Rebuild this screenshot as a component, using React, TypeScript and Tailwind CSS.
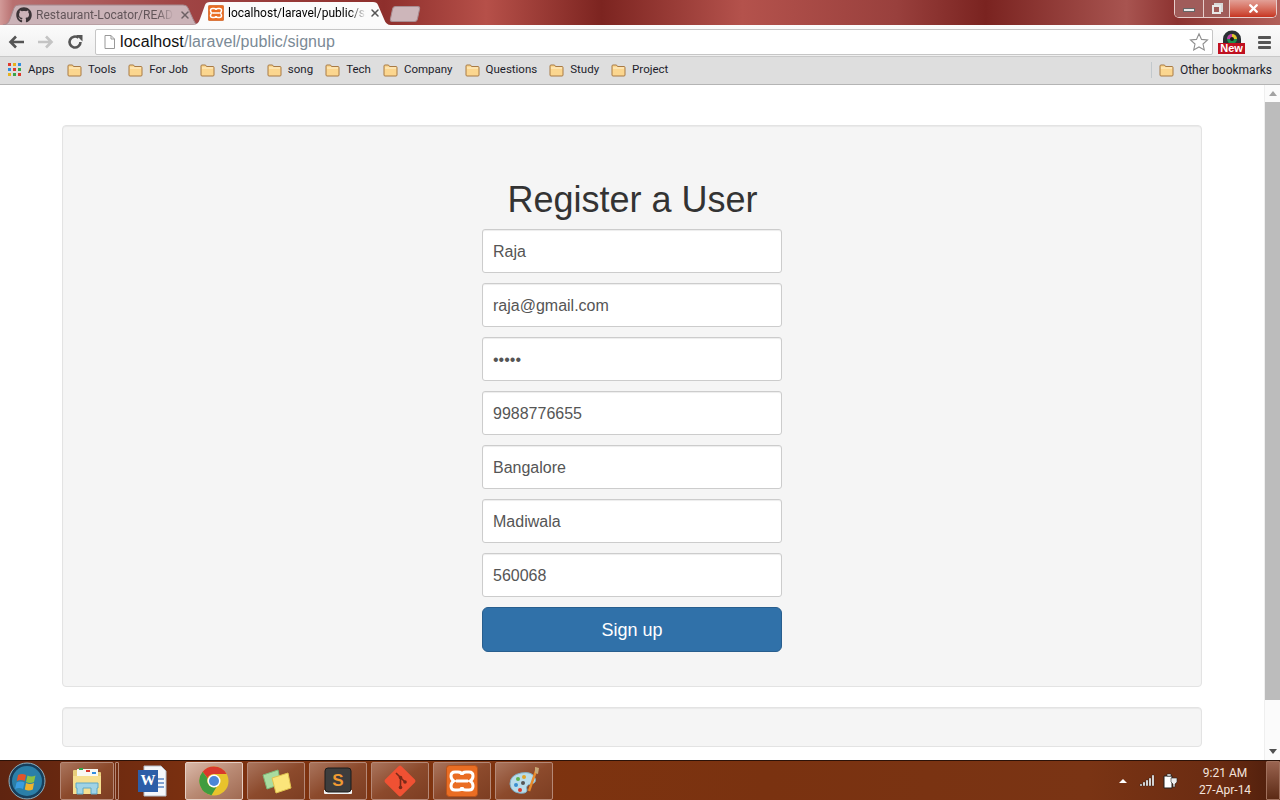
import { FaGithub } from "react-icons/fa";
import { X } from "lucide-react";

const bookmarks = ["Tools", "For Job", "Sports", "song", "Tech", "Company", "Questions", "Study", "Project"];
const fields = ["Raja", "raja@gmail.com", "*****", "9988776655", "Bangalore", "Madiwala", "560068"];

function Folder() {
  return (
    <svg width="15" height="14" viewBox="0 0 15 14" className="shrink-0">
      <path d="M1 12V3q0-1 1-1h3.500l1 1.500H13q1 0 1 1V12q0 1-1 1H2q-1 0-1-1z" fill="#fbd68f" stroke="#a87a45" />
      <path d="M2 5h11" stroke="#fff1cf" />
    </svg>
  );
}

function AppsGrid() {
  const colors = ["#e0382c", "#e8b21c", "#2f8de0", "#2f8de0", "#e0382c", "#3aa54a", "#e8b21c", "#3aa54a", "#e0382c"];
  return (
    <div className="grid h-[13px] w-[13px] shrink-0 grid-cols-3 gap-[2px]">
      {colors.map((c, i) => (
        <svg key={i} viewBox="0 0 3 3" className="h-[3px] w-[3px]">
          <rect width="3" height="3" fill={c} />
        </svg>
      ))}
    </div>
  );
}

function XamppIcon({ size = 16 }: { size?: number }) {
  return (
    <svg width={size} height={size} viewBox="0 0 16 16" className="shrink-0">
      <rect x=".25" y=".25" width="15.500" height="15.500" rx="1.500" fill="#ea6d23" stroke="#b9531a" strokeWidth=".5" />
      <path
        d="M4.500 3.500h1.500Q8 3.500 8 5q0-1.500 2-1.500h1.500q2 0 2 2 0 1.800-1.500 2.500 1.500.7 1.500 2.500 0 2-2 2H10q-2 0-2-1.500 0 1.500-2 1.500H4.500q-2 0-2-2 0-1.800 1.500-2.500-1.500-.7-1.500-2.500 0-2 2-2z"
        fill="none"
        stroke="#fff"
        strokeWidth="1.500"
      />
      <path d="M5 8h6" stroke="#fff" strokeWidth="1.500" />
    </svg>
  );
}

function ChromeLogo() {
  return (
    <svg width="30" height="30" viewBox="0 0 30 30">
      <circle cx="15" cy="15" r="14.500" fill="#e8c32c" />
      <path d="M15 .5A14.500 14.500 0 0 1 27.600 8H15a7 7 0 0 0-6.400 4.200L3.600 5.800A14.500 14.500 0 0 1 15 .5z" fill="#d8392c" />
      <path d="M3.600 5.800A14.500 14.500 0 0 0 12.500 29.300L17.500 21a7 7 0 0 1-9-8.800z" fill="#3f9c3f" />
      <circle cx="15" cy="15" r="6.500" fill="#fff" />
      <circle cx="15" cy="15" r="5" fill="#4c86d6" />
    </svg>
  );
}

function TaskButton({ active, children, plain, narrow }: { active?: boolean; plain?: boolean; narrow?: boolean; children: React.ReactNode }) {
  const skin = plain
    ? "w-[66px]"
    : active
      ? "w-[58px] rounded-[2px] border border-[#e6cfc4] bg-gradient-to-br from-[#d9b8a8] via-[#b98a74] to-[#a06a52]"
      : `${narrow ? "w-[54px]" : "w-[58px]"} rounded-[2px] border border-[#b58876] bg-gradient-to-br from-[#a9745c] via-[#8c4a2c] to-[#7d3e22]`;
  return <div className={`flex h-[38px] shrink-0 items-center justify-center ${skin}`}>{children}</div>;
}

export default function App() {
  return (
    <div className="flex h-[800px] w-[1280px] flex-col overflow-hidden bg-white font-['Liberation_Sans',Arial,sans-serif]">
      {/* window frame + tabs */}
      <div className="flex h-[25px] shrink-0 items-end justify-between bg-[linear-gradient(90deg,#d29a98_0%,#b87070_1%,#a04545_14%,#8e2f2c_30%,#b65049_38%,#7c2420_47%,#b4524c_58%,#99403d_70%,#7a2320_77%,#a85450_88%,#8c3230_92%,#b2605a_100%)]">
        <div className="flex items-end pl-[3px]">
          <div className="relative flex h-[21px] w-[196px] items-center pl-[13px] pr-[8px]">
            <svg viewBox="0 0 196 21" preserveAspectRatio="none" className="absolute inset-0 h-full w-full">
              <path d="M0 21Q5 21 7 15L11 4Q12 1 16 1H180Q184 1 185 4L190 15Q192 21 196 21z" fill="#cbb3b8" stroke="#a58a8f" />
            </svg>
            <FaGithub className="relative h-[16px] w-[16px] shrink-0 text-[#3a3336]" />
            <span className="relative ml-[4px] w-[138px] overflow-hidden whitespace-nowrap font-['Roboto',sans-serif] text-[12px] text-[#625559] [mask-image:linear-gradient(90deg,#000_88%,transparent)]">
              Restaurant-Locator/README.md
            </span>
            <X className="relative ml-auto h-[12px] w-[12px] text-[#6d6165]" strokeWidth={3} />
          </div>
          <div className="relative -ml-[6px] flex h-[24px] w-[198px] items-center pl-[15px] pr-[10px]">
            <svg viewBox="0 0 198 24" preserveAspectRatio="none" className="absolute inset-0 h-full w-full">
              <path d="M0 24Q5 24 7 18L12 4Q13 1 17 1H180Q184 1 185 4L191 18Q193 24 198 24z" fill="#fbfbfb" />
            </svg>
            <div className="relative">
              <XamppIcon />
            </div>
            <span className="relative ml-[4px] w-[138px] overflow-hidden whitespace-nowrap font-['Roboto',sans-serif] text-[12px] text-black [mask-image:linear-gradient(90deg,#000_88%,transparent)]">
              localhost/laravel/public/signup
            </span>
            <X className="relative ml-auto h-[12px] w-[12px] text-[#555]" strokeWidth={3} />
          </div>
          <div className="mb-[3px] h-[16px] w-[28px] -skew-x-12 rounded-[3px] border border-[#a78d92] bg-[#cdb6ba]" />
        </div>
        {/* window controls */}
        <div className="mb-[7px] mr-[3px] flex h-[18px] w-[103px] self-start overflow-hidden rounded-b-[5px] border border-t-0 border-[#e7cdcb]">
          <div className="flex w-[29px] items-center justify-center border-r border-[#e7cdcb] bg-[#a05c5a]">
            <div className="mt-[3px] h-[4px] w-[12px] border border-[#666] bg-[#e8e8e8]" />
          </div>
          <div className="flex w-[26px] items-center justify-center border-r border-[#e7cdcb] bg-[#a05c5a]">
            <div className="relative mt-[2px] h-[9px] w-[9px] border-2 border-[#e8e8e8] shadow-[2px_-2px_0_0_#d8d8d8]" />
          </div>
          <div className="flex flex-1 items-center justify-center bg-gradient-to-b from-[#e2a097] to-[#c6331f]">
            <X className="h-[13px] w-[13px] text-white" strokeWidth={4.5} />
          </div>
        </div>
      </div>

      {/* toolbar */}
      <div className="flex h-[32px] shrink-0 items-center border-b border-[#c8c8c8] bg-gradient-to-b from-[#fbfbfb] to-[#efefef] pl-[8px] pt-[3px]">
        <svg width="80" height="18" viewBox="0 0 80 18" className="shrink-0">
          <path d="M16 9H3M8 3.500 2.500 9 8 14.500" fill="none" stroke="#555" strokeWidth="2.600" />
          <path d="M30 9h13M38 3.500 43.500 9 38 14.500" fill="none" stroke="#c4c4c4" strokeWidth="2.600" />
          <path d="M72.500 9A5.500 5.500 0 1 1 70.500 4.800" fill="none" stroke="#555" strokeWidth="2.600" />
          <path d="M68 2h6.500v6.500z" fill="#555" />
        </svg>
        <div className="ml-[7px] flex h-[26px] w-[1118px] items-center rounded-[2px] border border-[#c6c6c6] bg-white pl-[8px] pr-[3px]">
          <svg width="11" height="14" viewBox="0 0 11 14" className="shrink-0">
            <path d="M1 .5h6l3.500 3.500v9.500H1z" fill="#fff" stroke="#999" />
            <path d="M7 .5V4h3.500" fill="none" stroke="#999" />
          </svg>
          <span className="ml-[5px] text-[16px] tracking-[0.08px] text-[#111]">
            localhost<span className="text-[#7b8a96]">/laravel/public/signup</span>
          </span>
          <svg width="20" height="20" viewBox="0 0 20 20" className="ml-auto">
            <path d="M10 1.800l2.500 5.600 6 .6-4.500 4 1.300 6L10 15l-5.300 3 1.300-6-4.500-4 6-.6z" fill="#fff" stroke="#8f8f8f" strokeWidth="1.100" />
          </svg>
        </div>
        <div className="relative ml-[5px] h-[24px] w-[27px] shrink-0">
          <svg width="20" height="16" viewBox="0 0 20 16" className="absolute left-[4px] top-0">
            <path d="M1 15v-6a9 8.500 0 0 1 18 0v6z" fill="#2a2f33" />
            <circle cx="10" cy="9" r="5" fill="#1c8f4c" />
            <path d="M10 4a5 5 0 0 1 5 5h-5z" fill="#e4c32a" />
            <path d="M10 9H5a5 5 0 0 1 5-5z" fill="#c03aa8" />
            <circle cx="10" cy="9" r="2" fill="#181818" />
          </svg>
          <div className="absolute bottom-0 left-0 flex h-[11px] w-[27px] items-center justify-center bg-[#c01020] text-[11px] font-bold leading-none text-white">
            New
          </div>
        </div>
        <div className="ml-[13px] flex w-[13px] shrink-0 flex-col gap-[2px]">
          <div className="h-[3px] rounded-[1px] bg-[#555]" />
          <div className="h-[3px] rounded-[1px] bg-[#555]" />
          <div className="h-[3px] rounded-[1px] bg-[#555]" />
        </div>
      </div>

      {/* bookmarks bar */}
      <div className="flex h-[28px] shrink-0 items-center border-b border-[#b4b4b4] bg-[#dedede] pb-[2px] pl-[8px] font-['Roboto',sans-serif] text-[11.5px] text-[#1d1d2b]">
        <AppsGrid />
        <span className="ml-[7px] w-[27px]">Apps</span>
        {bookmarks.map((b) => (
          <div key={b} className="ml-[12px] flex items-center gap-[6px]">
            <Folder />
            <span>{b}</span>
          </div>
        ))}
        <div className="ml-auto flex items-center gap-[6px] pr-[8px]">
          <div className="mr-[1px] h-[16px] w-px bg-[#c2c8cc]" />
          <Folder />
          <span className="text-[12px]">Other bookmarks</span>
        </div>
      </div>

      {/* page */}
      <div className="flex min-h-0 flex-1">
        <div className="flex-1 px-[62px] pt-[40px]">
          <div className="flex h-[562px] w-[1140px] flex-col items-center rounded border border-[#e3e3e3] bg-[#f5f5f5] pt-[52px] shadow-[inset_0_1px_1px_rgba(0,0,0,0.05)]">
            <h1 className="h-[51px] pl-[1px] text-center text-[36px] leading-[44px] text-[#333]">Register a User</h1>
            <form className="flex w-[300px] flex-col gap-[10px]">
              {fields.map((f, i) => (
                <input
                  key={i}
                  readOnly
                  type={i === 2 ? "password" : "text"}
                  defaultValue={f}
                  className="h-[44px] w-full rounded-[3px] border border-[#ccc] bg-white px-[10px] pt-[2px] text-[16px] text-[#555] shadow-[inset_0_1px_1px_rgba(0,0,0,0.075)] outline-none"
                />
              ))}
              <button
                type="button"
                className="h-[45px] rounded-[6px] border border-[#285e8e] bg-[#3071a9] pt-[2px] text-[18px] text-white"
              >
                Sign up
              </button>
            </form>
          </div>
          <div className="mt-[20px] h-[40px] w-[1140px] rounded border border-[#e3e3e3] bg-[#f5f5f5] shadow-[inset_0_1px_1px_rgba(0,0,0,0.05)]" />
        </div>
        {/* scrollbar */}
        <div className="flex w-[16px] shrink-0 flex-col items-center border-l border-[#efefef] bg-[#fbfbfb]">
          <div className="flex h-[17px] items-center justify-center">
            <div className="h-0 w-0 border-x-[4px] border-b-[5px] border-x-transparent border-b-[#a3a3a3]" />
          </div>
          <div className="h-[598px] w-[15px] bg-[#bcbcbc]" />
          <div className="mt-auto flex h-[17px] items-center justify-center">
            <div className="h-0 w-0 border-x-[4px] border-t-[5px] border-x-transparent border-t-[#505050]" />
          </div>
        </div>
      </div>

      {/* taskbar */}
      <div className="flex h-[40px] shrink-0 items-center border-t border-[#2c1208] bg-[linear-gradient(90deg,#5f2410_0%,#7b3010_15%,#80340f_30%,#7a3210_60%,#7a3414_85%,#6b2c12_95%,#4e1e0c_100%)] pl-[8px]">
        <svg width="38" height="38" viewBox="0 0 38 38" className="shrink-0">
          <circle cx="19" cy="19" r="18" fill="#173f5c" stroke="#8fb0bf" />
          <circle cx="19" cy="19" r="15" fill="#2b7fa8" />
          <path d="M10 13q4-2 8 0l-1.200 6q-4-2-8 0z" fill="#e2542a" />
          <path d="M19.500 13.500q4 2 8 0L26 20q-4 2-8 0z" fill="#8cc043" />
          <path d="M8.500 20.500q4-2 8 0L15 27q-4-2-8 0z" fill="#3a9ce0" />
          <path d="M18 21q4 2 8 0l-1.200 6.500q-4 2-8 0z" fill="#f0b32c" />
        </svg>
        <div className="ml-[14px]">
          <TaskButton narrow>
            <svg width="32" height="30" viewBox="0 0 32 30">
              <path d="M2 5q0-1 1-1h10l2 2h14q1 0 1 1v21H2z" fill="#e9cf7c" />
              <rect x="6" y="3" width="21" height="7" fill="#f8f8f2" />
              <rect x="8" y="2" width="4" height="2" fill="#2fa84a" />
              <rect x="15" y="4" width="4" height="2" fill="#d8392c" />
              <rect x="21" y="6" width="4" height="2" fill="#2f8de0" />
              <path d="M2 10h28v18H2z" fill="#f6df90" />
              <path d="M6 28v-6h-1v-5h22v5h-1v6h-6v-6h-8v6z" fill="#9fd3e6" stroke="#5fa8c6" />
            </svg>
          </TaskButton>
        </div>
        <div className="ml-[1px] h-[38px] w-[4px] rounded-[1px] border border-[#b58876]" />
        <TaskButton plain>
          <svg width="32" height="32" viewBox="0 0 32 32">
            <path d="M8 1h17l5 5v25H8z" fill="#f5f7fa" stroke="#b4bdc8" />
            <rect x="2" y="5" width="20" height="22" fill="#2c5ea8" />
            <text x="12" y="20" textAnchor="middle" fontSize="15" fontWeight="700" fill="#fff" fontFamily="Liberation Serif">W</text>
            <path d="M22 14h6M22 18h6M22 22h6" stroke="#5b86c4" strokeWidth="1.500" />
          </svg>
        </TaskButton>
        <TaskButton active>
          <ChromeLogo />
        </TaskButton>
        <div className="ml-[4px]">
          <TaskButton>
            <svg width="32" height="30" viewBox="0 0 32 30">
              <path d="M3 9l15-5 3 14-14 5z" fill="#a9dca0" stroke="#7db878" />
              <path d="M12 12l16-5 3 15-15 5z" fill="#fbe57a" stroke="#e0c24e" />
            </svg>
          </TaskButton>
        </div>
        <div className="ml-[4px]">
          <TaskButton>
            <svg width="32" height="30" viewBox="0 0 32 30">
              <path d="M2 24v3q0 1 1 1h26q1 0 1-1v-3z" fill="#f4f4f4" />
              <rect x="3" y="2" width="26" height="24" rx="3" fill="#3d3d3d" stroke="#1c1c1c" />
              <text x="16" y="20" textAnchor="middle" fontSize="17" fontWeight="700" fill="#f09a32" fontFamily="Liberation Sans">S</text>
            </svg>
          </TaskButton>
        </div>
        <div className="ml-[4px]">
          <TaskButton>
            <svg width="34" height="34" viewBox="0 0 34 34">
              <rect x="5.500" y="5.500" width="23" height="23" rx="2" transform="rotate(45 17 17)" fill="#f05133" />
              <path d="M13 9l4.500 4.500M17.500 13.500v10M17.500 13.500l4.500 4.500" stroke="#7a2a18" strokeWidth="1.600" />
              <circle cx="17.500" cy="13.500" r="1.800" fill="#7a2a18" />
              <circle cx="17.500" cy="23.500" r="1.800" fill="#7a2a18" />
              <circle cx="22" cy="18" r="1.800" fill="#7a2a18" />
            </svg>
          </TaskButton>
        </div>
        <div className="ml-[4px]">
          <TaskButton>
            <XamppIcon size={32} />
          </TaskButton>
        </div>
        <div className="ml-[4px]">
          <TaskButton>
            <svg width="32" height="32" viewBox="0 0 32 32">
              <path d="M2 19q0-9 11-11t14 5q2 5-4 6t-4 6q0 4-8 3T2 19z" fill="#b9dcea" stroke="#7fb0c8" />
              <circle cx="10" cy="14" r="2" fill="#5eb14e" />
              <circle cx="16" cy="12" r="2" fill="#e0a52c" />
              <circle cx="8" cy="20" r="2" fill="#3a8fd0" />
              <circle cx="15" cy="18" r="2" fill="#555" />
              <circle cx="12" cy="25" r="2" fill="#d8392c" />
              <path d="M29 3l-8 23" stroke="#e88a2c" strokeWidth="2.400" />
              <path d="M27 2l4 1-1 6-3-1z" fill="#c9a878" />
            </svg>
          </TaskButton>
        </div>

        {/* tray */}
        <div className="ml-auto flex h-full items-center">
          <div className="h-0 w-0 border-x-[4px] border-b-[4px] border-x-transparent border-b-white" />
          <svg width="16" height="13" viewBox="0 0 16 13" className="ml-[12px]">
            <path d="M1 10h2v2H1zM4 8h2v4H4zM7 6h2v6H7zM10 4h2v8h-2zM13 1h2v11h-2z" fill="#fff" stroke="#222" strokeWidth=".4" />
          </svg>
          <svg width="15" height="16" viewBox="0 0 15 16" className="ml-[8px]">
            <path d="M1 3h8v12H1z" fill="#fff" stroke="#222" />
            <path d="M4 1h4v2H4z" fill="#fff" stroke="#222" strokeWidth=".6" />
            <path d="M8 5h6v4l-2 2v3h-2v-3L8 9z" fill="#eee" stroke="#222" strokeWidth=".6" />
          </svg>
          <div className="ml-[19px] mt-[3px] w-[56px] text-center font-['Roboto',sans-serif] text-[12px] leading-[17px] text-[#f4e4dc]">
            <div>9:21 AM</div>
            <div className="whitespace-nowrap">27-Apr-14</div>
          </div>
          <div className="ml-[13px] h-[39px] w-[14px] rounded-[1px] border border-[#a0705c] bg-gradient-to-b from-[#9a6450] to-[#5c2a14]" />
        </div>
      </div>
    </div>
  );
}
